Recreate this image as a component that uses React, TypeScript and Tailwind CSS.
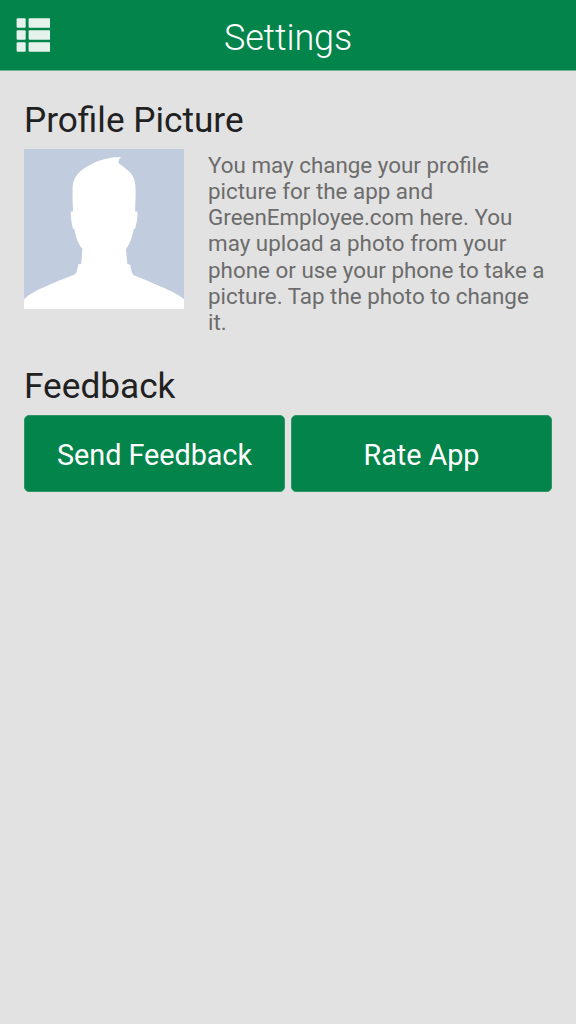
import type { ReactNode } from "react"

function MenuIcon() {
  return (
    <svg viewBox="0 0 34 34" className="w-[34px] h-[34px]" fill="#e6f2ec">
      {[0.3, 12.3, 24.3].map((y) => (
        <g key={y}>
          <rect x="0.6" y={y} width="9.1" height="9.4" rx="1" />
          <rect x="12.6" y={y} width="21.6" height="9.4" rx="1" />
        </g>
      ))}
    </svg>
  )
}

function Avatar() {
  return (
    <svg viewBox="0 0 480 480" className="block w-40 h-40 shrink-0 bg-[#c2ccdf]" fill="#fff">
      <path d="M0 480V451C12 437 38 423 70 410C102 396 130 385 154 376C160 366 161 355 163 346L172 344L175 299C161 285 156 263 151 241L147 239C142 223 141 206 140 190Q141 187 147 187C146 161 145 138 146 113C148 82 168 65 192 51C222 33 258 24 291 24Q281 32 284 43C305 60 332 72 334 108C336 136 334 162 333 187Q340 187 341 191C340 207 338 224 333 239L329 241C325 263 319 283 306 301L310 345L319 347C320 357 322 369 328 378C359 391 392 404 422 418C448 429 469 441 480 451V480Z" />
    </svg>
  )
}

function Button({ children }: { children: ReactNode }) {
  return (
    <button
      type="button"
      className="flex-1 h-[77px] rounded-[5px] border border-[#2f9468] bg-[#03844a] pt-1 text-[28.8px] tracking-[-0.05px] text-white"
    >
      {children}
    </button>
  )
}

export default function App() {
  return (
    <div className="min-h-screen bg-[#e2e2e2] font-[Roboto,sans-serif] text-[#212121]">
      <header className="grid h-[71px] grid-cols-[1fr_auto_1fr] items-center border-b border-[#75b093] bg-[#03844a]">
        <button type="button" aria-label="Menu" className="pl-4">
          <MenuIcon />
        </button>
        <h1 className="pt-1.5 text-[36px] leading-[42px] font-light tracking-[-0.15px] text-white">Settings</h1>
      </header>

      <main className="px-6 pt-[29px]">
        {/* Profile picture */}
        <section>
          <h2 className="text-[35.2px] leading-[41px]">Profile Picture</h2>
          <div className="mt-2 flex gap-6">
            <Avatar />
            <p className="pt-[3px] text-[22.4px] leading-[26.15px] text-[#6c6c6c]">
              You may change your profile picture for the app and GreenEmployee.com here. You may upload a photo from
              your phone or use your phone to take a picture. Tap the photo to change it.
            </p>
          </div>
        </section>

        {/* Feedback */}
        <section className="mt-[31px]">
          <h2 className="text-[35.2px] leading-[41px]">Feedback</h2>
          <div className="mt-2 flex gap-1.5">
            <Button>Send Feedback</Button>
            <Button>Rate App</Button>
          </div>
        </section>
      </main>
    </div>
  )
}
